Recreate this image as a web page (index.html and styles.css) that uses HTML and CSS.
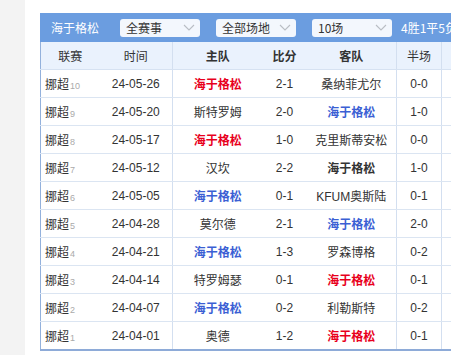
FILE: index.html
```html
<!DOCTYPE html>
<html lang="zh">
<head>
<meta charset="utf-8">
<link rel="stylesheet" href="styles.css">
</head>
<body>
<div class="page">
  <div class="rail"></div>
  <main class="main">
    <div class="panel">
      <div class="bar">
        <span class="team-label">海于格松</span>
        <div class="select"><span>全赛事</span><svg class="chev" viewBox="0 0 12 7" width="12" height="7"><path d="M1 1 L6 6 L11 1" fill="none" stroke="#b9bdc4" stroke-width="1.1"/></svg></div>
        <div class="select"><span>全部场地</span><svg class="chev" viewBox="0 0 12 7" width="12" height="7"><path d="M1 1 L6 6 L11 1" fill="none" stroke="#b9bdc4" stroke-width="1.1"/></svg></div>
        <div class="select"><span>10场</span><svg class="chev" viewBox="0 0 12 7" width="12" height="7"><path d="M1 1 L6 6 L11 1" fill="none" stroke="#b9bdc4" stroke-width="1.1"/></svg></div>
        <span class="summary">4胜1平5负</span>
      </div>
      <table class="grid">
        <colgroup>
          <col class="c-lg"><col class="c-time"><col class="c-home"><col class="c-score"><col class="c-away"><col class="c-half"><col class="c-extra">
        </colgroup>
        <thead>
          <tr>
            <th>联赛</th><th class="sep">时间</th><th class="b">主队</th><th class="b">比分</th><th class="b sep">客队</th><th class="sep">半场</th><th></th>
          </tr>
        </thead>
        <tbody>
          <tr><td class="lg">挪超<span class="no">10</span></td><td class="sep">24-05-26</td><td class="win">海于格松</td><td>2-1</td><td class="sep">桑纳菲尤尔</td><td class="sep">0-0</td><td></td></tr>
          <tr><td class="lg">挪超<span class="no">9</span></td><td class="sep">24-05-20</td><td>斯特罗姆</td><td>2-0</td><td class="sep lose">海于格松</td><td class="sep">1-0</td><td></td></tr>
          <tr><td class="lg">挪超<span class="no">8</span></td><td class="sep">24-05-17</td><td class="win">海于格松</td><td>1-0</td><td class="sep">克里斯蒂安松</td><td class="sep">0-0</td><td></td></tr>
          <tr><td class="lg">挪超<span class="no">7</span></td><td class="sep">24-05-12</td><td>汉坎</td><td>2-2</td><td class="sep draw">海于格松</td><td class="sep">1-0</td><td></td></tr>
          <tr><td class="lg">挪超<span class="no">6</span></td><td class="sep">24-05-05</td><td class="lose">海于格松</td><td>0-1</td><td class="sep">KFUM奥斯陆</td><td class="sep">0-1</td><td></td></tr>
          <tr><td class="lg">挪超<span class="no">5</span></td><td class="sep">24-04-28</td><td>莫尔德</td><td>2-1</td><td class="sep lose">海于格松</td><td class="sep">2-0</td><td></td></tr>
          <tr><td class="lg">挪超<span class="no">4</span></td><td class="sep">24-04-21</td><td class="lose">海于格松</td><td>1-3</td><td class="sep">罗森博格</td><td class="sep">0-2</td><td></td></tr>
          <tr><td class="lg">挪超<span class="no">3</span></td><td class="sep">24-04-14</td><td>特罗姆瑟</td><td>0-1</td><td class="sep win">海于格松</td><td class="sep">0-1</td><td></td></tr>
          <tr><td class="lg">挪超<span class="no">2</span></td><td class="sep">24-04-07</td><td class="lose">海于格松</td><td>0-2</td><td class="sep">利勒斯特</td><td class="sep">0-2</td><td></td></tr>
          <tr><td class="lg">挪超<span class="no">1</span></td><td class="sep">24-04-01</td><td>奥德</td><td>1-2</td><td class="sep win">海于格松</td><td class="sep">0-1</td><td></td></tr>
        </tbody>
      </table>
    </div>
  </main>
</div>
</body>
</html>
```

FILE: styles.css
```css
html, body {
  margin: 0;
  padding: 0;
  overflow: hidden;
  background: #fff;
}

body {
  font-family: "Liberation Sans", "Noto Sans CJK SC", sans-serif;
  font-size: 12px;
  color: #333;
}

.page {
  display: flex;
  min-height: 355px;
}

.rail {
  flex: 0 0 25px;
  background: #f3f3f3;
}

.main {
  flex: 1 0 auto;
  padding: 13px 0 0 15px;
}

.panel {
  width: 480px;
}

.bar {
  display: flex;
  align-items: center;
  height: 29px;
  background: #6b9de0;
  padding-left: 11px;
  color: #fff;
}

.team-label {
  font-family: "Noto Sans CJK SC", sans-serif;
  font-size: 12px;
  width: 69px;
}

.select {
  display: flex;
  align-items: center;
  justify-content: space-between;
  box-sizing: border-box;
  width: 80px;
  height: 18px;
  margin-right: 16px;
  padding: 0 5px 0 6px;
  background: #f3f7fd;
  border-radius: 3px;
  color: #333;
  font-family: "Noto Sans CJK SC", sans-serif;
  font-size: 12px;
}

.select:nth-of-type(3) {
  margin-right: 9px;
}

.chev {
  display: block;
}

.summary {
  font-family: "Noto Sans CJK SC", sans-serif;
  white-space: nowrap;
}

.grid {
  border-collapse: collapse;
  table-layout: fixed;
  width: 480px;
  border-left: 1px solid #93b1dc;
  border-bottom: 2px solid #8eabd8;
}

.c-lg { width: 59px; }
.c-time { width: 73px; }
.c-home { width: 90px; }
.c-score { width: 44px; }
.c-away { width: 90px; }
.c-half { width: 45px; }
.c-extra { width: 79px; }

th, td {
  height: 27px;
  padding: 0;
  text-align: center;
  border-bottom: 1px solid #dbe5f2;
  white-space: nowrap;
  overflow: hidden;
}

th {
  background: #eaf2fd;
  font-weight: normal;
  font-family: "Noto Sans CJK SC", sans-serif;
  color: #333;
  border-bottom-color: #d6e2f2;
}

th.b {
  font-weight: bold;
}

.sep {
  border-right: 1px solid #d3dff0;
}

td.lg {
  text-align: left;
  padding-left: 4px;
}

.no {
  font-size: 9px;
  color: #aaa;
  margin-left: 1px;
}

.win, .lose, .draw {
  font-weight: bold;
  font-family: "Noto Sans CJK SC", sans-serif;
}

.win { color: #e8001c; }
.lose { color: #3b5fd4; }
.draw { color: #333; }
```
